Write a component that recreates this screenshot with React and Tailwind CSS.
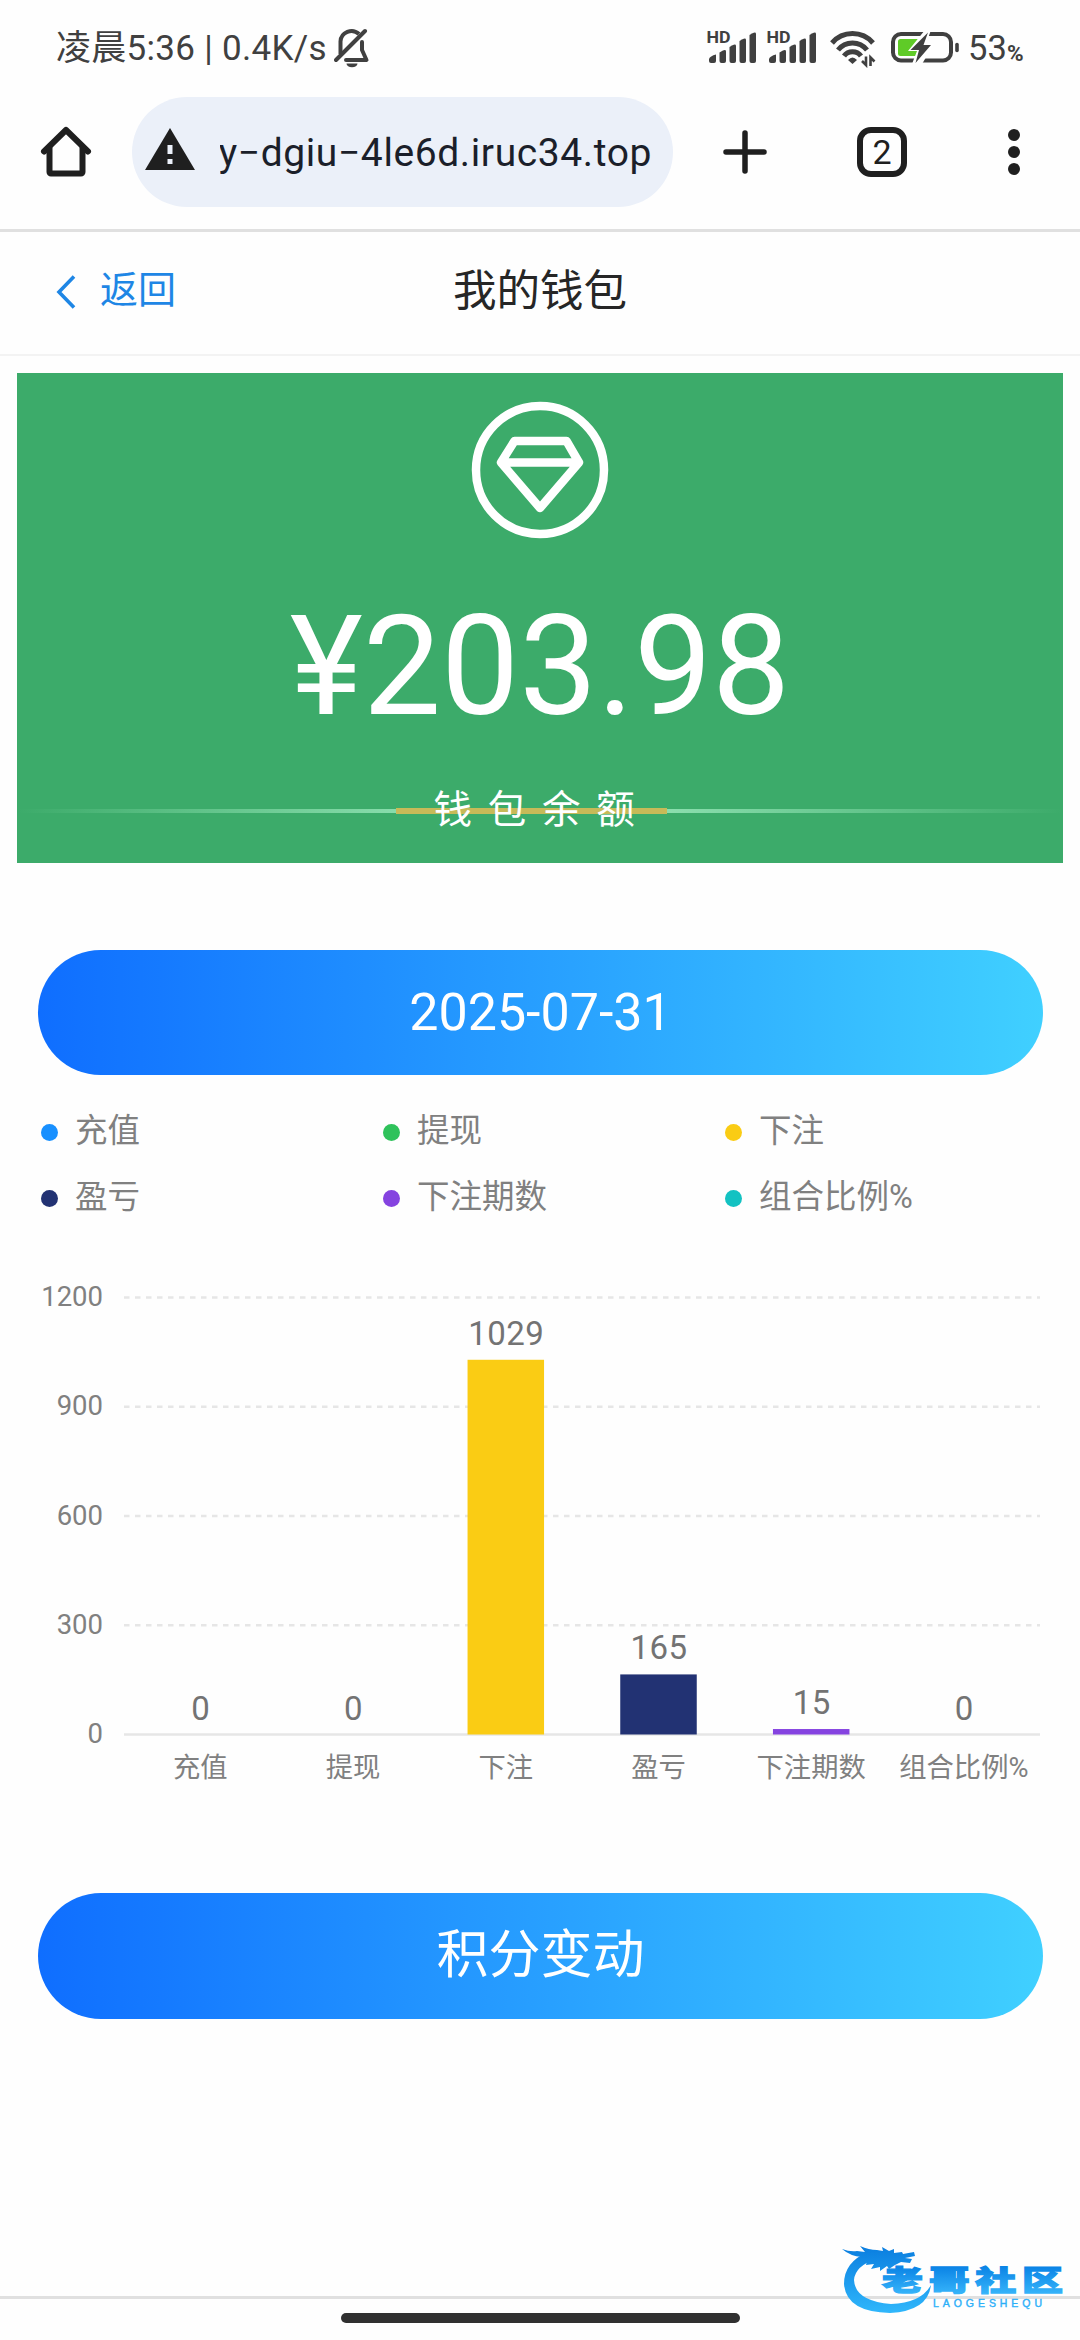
import React from "react";

const records = [
  { label: "充值", value: 0, color: "#1890ff", dot: "bg-[#1890ff]" },
  { label: "提现", value: 0, color: "#2fc25b", dot: "bg-[#2fc25b]" },
  { label: "下注", value: 1029, color: "#facc14", dot: "bg-[#facc14]" },
  { label: "盈亏", value: 165, color: "#223273", dot: "bg-[#223273]" },
  { label: "下注期数", value: 15, color: "#8543e0", dot: "bg-[#8543e0]" },
  { label: "组合比例%", value: 0, color: "#13c2c2", dot: "bg-[#13c2c2]" },
];

const ticks = [1200, 900, 600, 300, 0];

function MutedBell() {
  return (
    <svg width="36" height="40" viewBox="0 0 36 40" fill="none" stroke="#404040" strokeWidth="4" className="ml-2">
      <path d="M6.500 26V13.500A11 11 0 0 1 25 6" />
      <path d="M28 14v8l4.500 10H12" strokeLinejoin="round" strokeLinecap="round" />
      <path d="M31 3 2 32" strokeLinecap="round" />
      <path d="M12.500 35.500h11a5.500 3.800 0 0 1-11 0z" fill="#404040" stroke="none" />
    </svg>
  );
}

function Signal() {
  return (
    <svg width="50" height="38" viewBox="0 -4 50 38" fill="#404040" className="-mt-2 overflow-visible">
      <text x="-0.500" y="13" fontSize="17" fontWeight="700" fontFamily="Roboto" textLength="24" lengthAdjust="spacingAndGlyphs">HD</text>
      <path d="M2 29q1-3 7-4.500V31q0 2-2 2H4q-2 0-2-2z" />
      <path d="M12.500 22.500l3-1.800q3.500-1.500 3.500.8V31q0 2-2 2h-2.500q-2 0-2-2z" />
      <path d="M22.500 17l3-1.800q3.500-1.500 3.500.8V31q0 2-2 2h-2.500q-2 0-2-2z" />
      <path d="M32.500 11l3-1.800q3.500-1.500 3.500.8V31q0 2-2 2h-2.500q-2 0-2-2z" />
      <path d="M42.500 5l3-1.800q3.500-1.500 3.500.8V31q0 2-2 2h-2.500q-2 0-2-2z" />
    </svg>
  );
}

function Wifi() {
  return (
    <svg width="48" height="38" viewBox="0 0 48 38" fill="none" stroke="#404040" strokeWidth="5">
      <path d="M3 13a27 27 0 0 1 41 0" />
      <path d="M9 20a18.500 18.500 0 0 1 29 0" />
      <path d="M15 26a10.500 10.500 0 0 1 17 0" />
      <path d="M19 30q4.500-5 9 0L23.500 34z" fill="#404040" stroke="none" />
      <path d="M37 26.500V35l-4-4M41.500 36v-8.500l4 4" strokeWidth="2.600" />
    </svg>
  );
}

function Battery() {
  return (
    <svg width="70" height="34" viewBox="0 0 70 34" fill="none" className="-mt-1">
      <rect x="3" y="4" width="58" height="26.500" rx="8" stroke="#404040" strokeWidth="4" />
      <path d="M10.500 9h21l-9 11.500h6L27 26H10.500Q8 26 8 23.500v-12Q8 9 10.500 9z" fill="#5fcb27" />
      <path d="M35 0 18 21h9L22 34h10L44 14h-8L41 0z" fill="#fff" />
      <path d="M38 2.500 20.500 20H29l-3.500 13L41 15h-7.500z" fill="#404040" />
      <path d="M67 14.500v6" stroke="#404040" strokeWidth="3.600" strokeLinecap="round" />
    </svg>
  );
}

function StatusBar() {
  return (
    <div className="h-[97px] flex items-start justify-between pl-[56px] pr-[53px] text-[#404040]">
      <div className="flex items-center mt-7 h-10">
        <span className="w-[270px] pt-0.5 text-[35px] leading-10 tracking-[0.300px] whitespace-nowrap">凌晨5:36 | 0.4K/s</span>
        <MutedBell />
      </div>
      <div className="flex items-center mt-[30px] h-[38px]">
        <Signal />
        <div className="w-[10px]" />
        <Signal />
        <div className="w-3" />
        <Wifi />
        <div className="w-[13px]" />
        <Battery />
        <span className="ml-2 w-[39px] text-[34.500px] leading-[34px] -mt-0.5">53</span>
        <span className="w-[20px] text-[22.500px] leading-[22px] font-bold pt-[7px]">%</span>
      </div>
    </div>
  );
}

function BrowserBar() {
  return (
    <div className="h-[135px] border-b-[3px] border-[#e0e0e0] flex items-start">
      <svg width="52" height="52" viewBox="0 0 52 52" fill="none" stroke="#1f1f1f" strokeWidth="6" strokeLinecap="round" strokeLinejoin="round" className="ml-10 mt-[29px]">
        <path d="M4 25.500 26 4l22 21.500" />
        <path d="M9.500 22v24a1.500 1.500 0 0 0 1.500 1.500h30a1.500 1.500 0 0 0 1.500-1.500V22" />
      </svg>
      <div className="ml-10 w-[541px] h-[110px] rounded-full bg-[#ebf0f9] flex items-center">
        <svg width="50" height="42" viewBox="0 0 50 42" className="ml-[13px] -mt-1.5">
          <path d="M25 0 50 42H0z" fill="#1f1f1f" />
          <path d="M22.500 17h5v9h-5zM22.500 31h5v5h-5z" fill="#ebf0f9" />
        </svg>
        <div className="ml-[25px] w-[432px] pt-0.5 overflow-hidden flex justify-end text-[39px] tracking-[0.600px] text-[#1b1f2a] whitespace-nowrap">y−dgiu−4le6d.iruc34.top</div>
      </div>
      <svg width="44" height="46" viewBox="0 0 44 46" stroke="#1f1f1f" strokeWidth="5.500" strokeLinecap="round" className="ml-[50px] mt-8">
        <path d="M22 4v38M3 23h38" />
      </svg>
      <div className="ml-[90px] mt-[30px] w-[50px] h-[50px] rounded-[14px] border-[6px] border-[#1f1f1f] text-[#1f1f1f] text-[34px] leading-[38px] text-center">2</div>
      <div className="ml-[101px] mt-8 flex flex-col gap-[5px]">
        <i className="w-3 h-3 rounded-full bg-[#1f1f1f]" />
        <i className="w-3 h-3 rounded-full bg-[#1f1f1f]" />
        <i className="w-3 h-3 rounded-full bg-[#1f1f1f]" />
      </div>
    </div>
  );
}

function BalanceCard() {
  return (
    <div className="mx-[17px] mt-[17px] h-[490px] bg-[#3cab6a] flex flex-col items-center text-white">
      <svg width="138" height="138" viewBox="0 0 138 138" fill="none" stroke="#fff" strokeWidth="8.500" strokeLinejoin="round" className="mt-7">
        <circle cx="69" cy="69" r="64" />
        <path d="M43.500 40h52L108 61.500 69 107 30 61.500zM30 61.500h78" />
      </svg>
      <div className="mt-[53px] h-[147px] text-[139px] leading-[150px]">¥203.98</div>
      <div className="relative mt-[50px] w-full h-[54px]">
        <div className="absolute inset-x-0 top-[20px] h-1 bg-linear-to-r/srgb from-[#a5efc4]/0 via-[#a5efc4] to-[#a5efc4]/0" />
        <div className="absolute left-[379px] top-[19px] w-[271px] h-[6px] bg-[#c7ba58]" />
        <div className="relative pl-1 text-center text-[38.500px] leading-[42px] tracking-[15.700px]">钱包余额</div>
      </div>
    </div>
  );
}

function PillButton({ children }) {
  return (
    <button className="block mx-[38px] w-[1005px] h-full rounded-full bg-linear-to-r/srgb from-[#0f6eff] to-[#40d0ff] text-white text-[52px] text-center">
      {children}
    </button>
  );
}

function Legend() {
  return (
    <div className="mt-[23px] ml-[41px] grid grid-cols-[342px_342px_1fr] text-[32.500px] leading-[66px] text-[#808080]">
      {records.map((r) => (
        <div key={r.label} className="flex items-center">
          <i className={`w-[17px] h-[17px] rounded-full mt-[3px] mr-[17px] ${r.dot}`} />
          {r.label}
        </div>
      ))}
    </div>
  );
}

function BarChart() {
  const base = 484.5;
  const y = (v) => base - (v / 1200) * 437;
  return (
    <svg width="1080" height="560" viewBox="0 0 1080 560" fill="#808080" className="mt-5 block">
      {ticks.map((t) => (
        <g key={t}>
          <text x="103" y={y(t) + 8.5} fontSize="27.500" textAnchor="end">{t}</text>
          <path d={`M124 ${y(t)}H1040`} stroke="#e6e6e6" strokeWidth="2.500" strokeDasharray={t ? "5.500 5.500" : undefined} />
        </g>
      ))}
      {records.map((r, i) => {
        const cx = 124 + 152.7 * (i + 0.5);
        return (
          <g key={r.label} textAnchor="middle">
            <rect x={cx - 38.2} y={y(r.value)} width="76.500" height={base - y(r.value)} fill={r.color} />
            <text x={cx + 0.5} y={y(r.value) - 15} fontSize="33" fill="#737373" letterSpacing="0.400">{r.value}</text>
            <text x={cx} y="527" fontSize="27.300">{r.label}</text>
          </g>
        );
      })}
    </svg>
  );
}

function SiteLogo() {
  return (
    <svg width="240" height="80" viewBox="0 0 240 80" className="absolute left-[840px] top-[2240px]">
      <defs>
        <linearGradient id="sea" gradientUnits="userSpaceOnUse" x1="0" y1="8" x2="0" y2="72">
          <stop offset="0" stopColor="#0b7fe0" />
          <stop offset="1" stopColor="#2fb6fb" />
        </linearGradient>
        <linearGradient id="name" gradientUnits="userSpaceOnUse" x1="0" y1="-34" x2="0" y2="4">
          <stop offset="0" stopColor="#0b84e6" />
          <stop offset="1" stopColor="#36b4fa" />
        </linearGradient>
      </defs>
      <g fill="url(#sea)">
        <path d="M28 12Q4 22 4 44q2 28 46 29 38-2 41-28-10 18-40 19-36-3-37-24 1-14 22-21z" />
        <path d="M2 9q8 3 15 2l8 1-5-6q9 4 17 4l6 1-1-4 7 4 5-2v4l8-1 1 2 11-2 1 4-10 2 7 1-2 4-9-1-6 3-6 4-2-3-7 5v-4l-9 2 3-5-8 1 1-4-9 2 4-6q-12-1-20-8z" />
        <text fontFamily="Noto Sans CJK SC" fontWeight="900" fontSize="41" textLength="181" lengthAdjust="spacing" transform="translate(42 51) scale(1 .7)" fill="url(#name)" stroke="url(#name)" strokeWidth="1.800">老哥社区</text>
        <text x="93" y="67" fontFamily="Liberation Sans" fontSize="10.500" textLength="109" stroke="url(#sea)" strokeWidth="0.400">LAOGESHEQU</text>
      </g>
    </svg>
  );
}

export default function App() {
  return (
    <div className="relative w-[1080px] h-[2340px] bg-[#fefefe] overflow-hidden font-['Roboto','Noto_Sans_CJK_SC',sans-serif]">
      <StatusBar />
      <BrowserBar />
      <header className="h-[124px] pb-1.5 border-b-2 border-[#f3f3f3] grid grid-cols-3 items-center">
        <div className="flex items-center pl-[56px] text-[#1e86e5] text-[38px] leading-[50px]">
          <svg width="20" height="34" viewBox="0 0 20 34" fill="none" stroke="#1e86e5" strokeWidth="3.600" className="mt-1 mr-6">
            <path d="M18 1.500 3 17l15 15.500" />
          </svg>
          返回
        </div>
        <h1 className="pt-[3px] text-[43.500px] text-center text-[#262626]">我的钱包</h1>
      </header>
      <BalanceCard />
      <div className="mt-[87px] h-[125px] leading-[50px]">
        <PillButton>2025-07-31</PillButton>
      </div>
      <Legend />
      <BarChart />
      <div className="mt-[83px] h-[126px]">
        <PillButton>积分变动</PillButton>
      </div>
      <div className="mt-[277px] h-[3px] bg-[#e0e0e0]" />
      <div className="mx-auto mt-[14px] w-[399px] h-[10px] rounded-full bg-[#303030]" />
      <SiteLogo />
    </div>
  );
}
